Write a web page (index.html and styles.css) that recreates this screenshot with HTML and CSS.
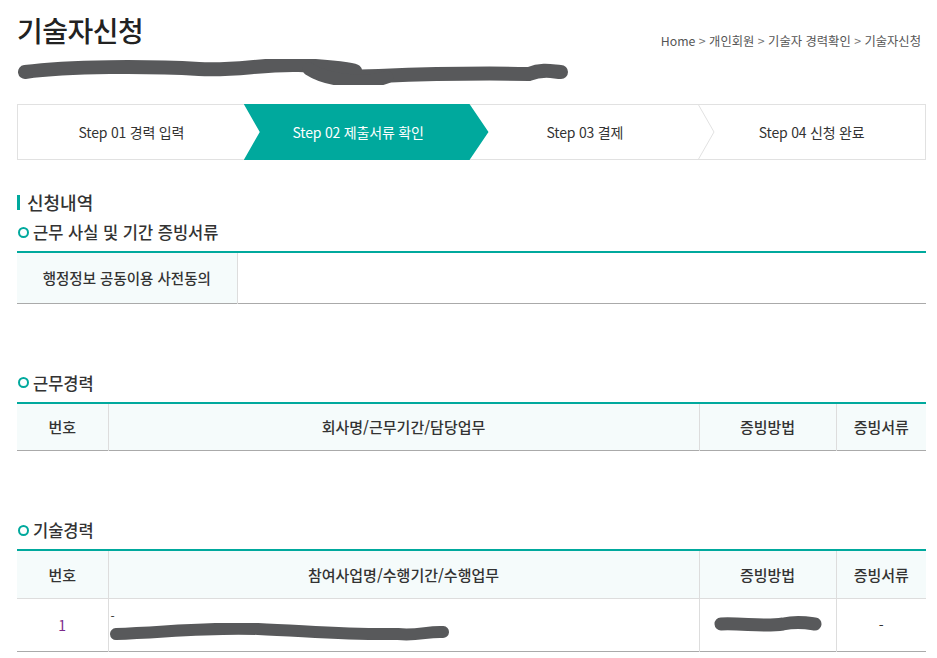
FILE: index.html
```html
<!DOCTYPE html>
<html lang="ko">
<head>
<meta charset="utf-8">
<title>기술자신청</title>
<link rel="stylesheet" href="styles.css">
</head>
<body>
<div class="page">
  <div class="head">
    <h1 class="title">기술자신청</h1>
    <div class="crumb">Home <span class="gt">&gt;</span> 개인회원 <span class="gt">&gt;</span> 기술자 경력확인 <span class="gt">&gt;</span> 기술자신청</div>
  </div>
  <svg class="scribble" width="560" height="26" viewBox="0 0 560 26">
    <path d="M16 13 C60 7 140 7 190 10 C230 12 250 5 290 6 C330 8 360 13 340 13 C300 13 330 19 370 17 C420 15 470 14 520 15 C535 9 545 13 552 13" fill="none" stroke="#58595b" stroke-width="14" stroke-linecap="round" stroke-linejoin="round"/>
    <path d="M300 10 C320 23 360 25 378 18" fill="none" stroke="#58595b" stroke-width="13" stroke-linecap="round"/>
  </svg>
  <div class="steps">
    <div class="step">Step 01 경력 입력</div>
    <div class="step active"><span>Step 02 제출서류 확인</span></div>
    <div class="step">Step 03 결제
      <svg class="chev" width="18" height="56" viewBox="0 0 18 56"><path d="M1 0 L17 28 L1 56" fill="none" stroke="#e1e1e1" stroke-width="1"/></svg>
    </div>
    <div class="step">Step 04 신청 완료</div>
  </div>

  <h3 class="sec">신청내역</h3>
  <h4 class="sub">근무 사실 및 기간 증빙서류</h4>
  <table class="tbl t1">
    <tr><th class="c-agree">행정정보 공동이용 사전동의</th><td></td></tr>
  </table>

  <h4 class="sub gap">근무경력</h4>
  <table class="tbl">
    <colgroup><col class="w1"><col class="w2"><col class="w3"><col class="w4"></colgroup>
    <tr class="hd"><th>번호</th><th>회사명/근무기간/담당업무</th><th>증빙방법</th><th>증빙서류</th></tr>
  </table>

  <h4 class="sub gap">기술경력</h4>
  <table class="tbl">
    <colgroup><col class="w1"><col class="w2"><col class="w3"><col class="w4"></colgroup>
    <tr class="hd"><th>번호</th><th>참여사업명/수행기간/수행업무</th><th>증빙방법</th><th>증빙서류</th></tr>
    <tr class="row">
      <td class="num">1</td>
      <td class="left"><div class="dash">-</div>
        <svg class="scr2" width="345" height="20" viewBox="0 0 345 20"><path d="M8 11 C60 9 100 4 150 6 C200 8 240 12 290 11 C310 13 320 8 335 9" fill="none" stroke="#58595b" stroke-width="12" stroke-linecap="round"/></svg>
      </td>
      <td><svg class="scr3" width="110" height="20" viewBox="0 0 110 20"><path d="M8 9 C30 8 50 12 70 9 C85 6 95 8 102 9" fill="none" stroke="#58595b" stroke-width="13" stroke-linecap="round"/></svg></td>
      <td>-</td>
    </tr>
  </table>
</div>
</body>
</html>
```
FILE: styles.css
```css
* { box-sizing: border-box; }
body {
  margin: 0;
  font-family: "Noto Sans CJK KR", "Noto Sans", sans-serif;
  color: #333;
  background: #fff;
}
.page { padding: 0 11px 0 17px; }
.head {
  display: flex;
  justify-content: space-between;
  align-items: flex-end;
  padding-top: 10px;
}
.title {
  margin: 0;
  font-size: 28px;
  line-height: 40px;
  font-weight: 500;
  color: #222;
  letter-spacing: -0.5px;
}
.crumb {
  font-size: 12.3px;
  line-height: 18px;
  color: #555;
  margin-right: 5px;
}
.gt { color: #777; }
.scribble { display: block; margin: 9px 0 0 -8px; }
.steps {
  margin-top: 19px;
  display: flex;
  height: 56px;
  border: 1px solid #e1e1e1;
}
.step {
  flex: 1;
  position: relative;
  display: flex;
  align-items: center;
  justify-content: center;
  font-size: 14px;
  color: #333;
  letter-spacing: -0.2px;
}
.step.active { color: #fff; z-index: 1; }
.step.active::before {
  content: "";
  position: absolute;
  top: -1px; bottom: -1px;
  left: -1px; right: -17px;
  background: #00a99d;
  clip-path: polygon(0 0, calc(100% - 19px) 0, 100% 50%, calc(100% - 19px) 100%, 0 100%, 16px 50%);
}
.step.active span { position: relative; }
.chev { position: absolute; right: -17px; top: -1px; }
.sec {
  margin: 31px 0 0;
  font-size: 18px;
  line-height: 22px;
  font-weight: 500;
  color: #333;
  display: flex;
  align-items: center;
}
.sec::before {
  content: "";
  width: 3px; height: 15px;
  background: #00a99d;
  margin-right: 7px;
}
.sub {
  margin: 8px 0 0;
  font-size: 16.5px;
  line-height: 22px;
  font-weight: 500;
  color: #333;
  display: flex;
  align-items: center;
}
.sub::before {
  content: "";
  width: 7px; height: 7px;
  border: 2.5px solid #00a99d;
  border-radius: 50%;
  margin: 0 4px 0 1px;
}
.sub.gap { margin-top: 68px; }
.tbl {
  margin-top: 8px;
  width: 100%;
  border-collapse: collapse;
  border-top: 2px solid #00a99d;
  border-bottom: 1px solid #aaa;
  table-layout: fixed;
  font-size: 15px;
}
.tbl th {
  background: #f5fbfb;
  font-weight: 500;
  color: #333;
  height: 48px;
  border-left: 1px solid #ddd;
  padding: 0;
  text-align: center;
}
.tbl th:first-child { border-left: none; }
.tbl td {
  border-left: 1px solid #ddd;
  text-align: center;
  color: #333;
  padding: 0;
}
.tbl td:first-child { border-left: none; }
.t1 th { height: 51px; font-size: 14.5px; }
.t1 .c-agree { width: 220px; }
.w1 { width: 91px; }
.w2 { width: 591px; }
.w3 { width: 137px; }
.w4 { width: 90px; }
.row td { height: 53px; border-top: 1px solid #ddd; font-size: 14px; }
.row .num { color: #7b2a8a; }
.row .left { text-align: left; padding-left: 2px; }
.dash { font-size: 12px; line-height: 14px; margin-top: 2px; }
.scr2 { display: block; margin-left: -3px; }
.scr3 { display: block; margin: 0 auto; }
```
